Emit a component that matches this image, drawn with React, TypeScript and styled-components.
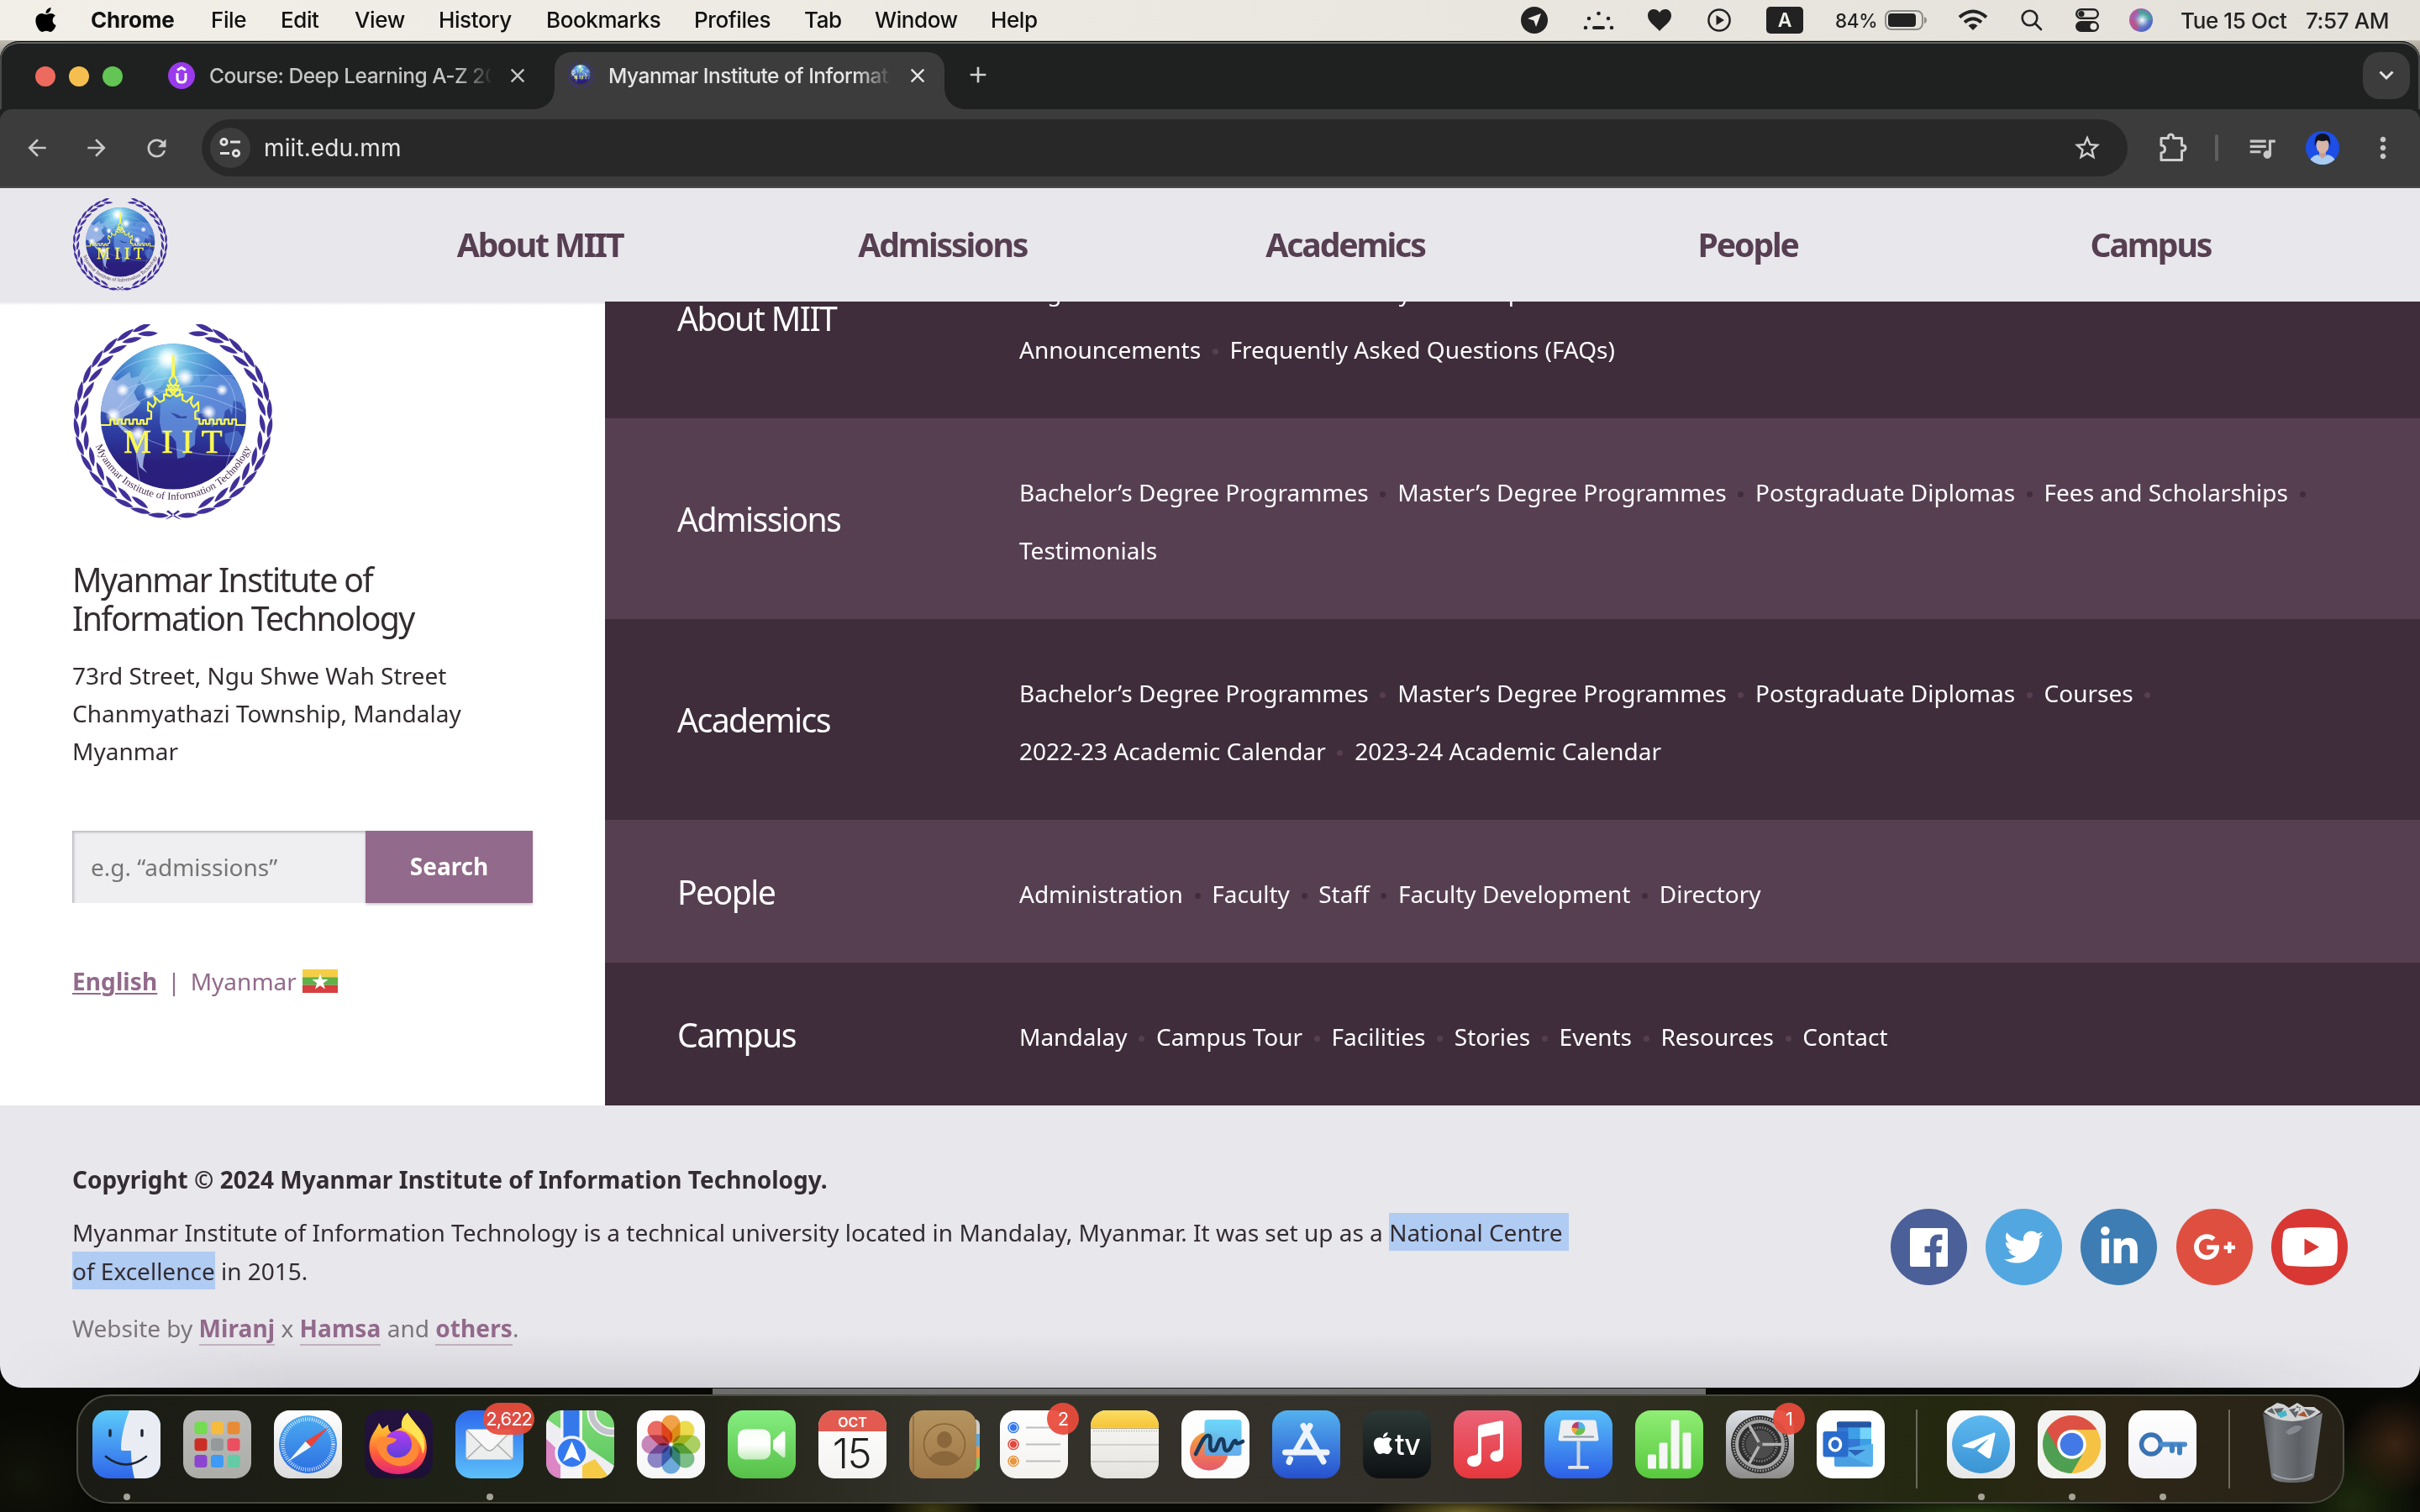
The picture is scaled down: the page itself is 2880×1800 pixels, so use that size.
import React from "react";
import styled, { createGlobalStyle } from "styled-components";
import { FaApple, FaTwitter, FaLinkedinIn, FaGooglePlusG } from "react-icons/fa";
import { MdArrowBack, MdArrowForward, MdRefresh, MdStarOutline, MdQueueMusic, MdClose, MdAdd, MdMoreVert } from "react-icons/md";

const ui = `Inter, "Liberation Sans", sans-serif`;
const noto = `"Noto Sans", "Open Sans", sans-serif`;

const Global = createGlobalStyle`
  html, body { margin: 0; padding: 0; }
  body { width: 2880px; height: 1800px; overflow: hidden; background: #0b0c07; }
  * { box-sizing: border-box; }
  svg { display: block; flex: none; }
`;

/* ---------- desktop ---------- */
const Desktop = styled.div`
  width: 2880px;
  height: 1800px;
  display: flex;
  flex-direction: column;
  overflow: hidden;
  background:
    linear-gradient(#c2bdb1, #8c887e) 0 48px / 100% 24px no-repeat,
    radial-gradient(ellipse 60px 30px at 1110px 1798px, #3c3a12, transparent),
    radial-gradient(ellipse 110px 20px at 1740px 1800px, #6e6226, transparent),
    radial-gradient(ellipse 160px 22px at 1920px 1802px, #3b3818, transparent),
    radial-gradient(ellipse 200px 22px at 2350px 1800px, #23370f, transparent),
    radial-gradient(ellipse 60px 60px at 2850px 1720px, #3a2413, transparent),
    radial-gradient(ellipse 90px 90px at 2800px 1790px, #1d2a0d, transparent),
    radial-gradient(ellipse 90px 80px at 30px 1760px, #12150a, transparent),
    #080805;
`;

const MenuBar = styled.header`
  height: 48px;
  flex: none;
  display: flex;
  justify-content: space-between;
  background: linear-gradient(90deg, #f1efe8, #e4e1da);
  font: 500 26px/47px ${ui};
  letter-spacing: -0.4px;
  color: #111;
  white-space: nowrap;
`;
const MenuItems = styled.div`
  display: grid;
  grid-template-columns: 67px 143px 83px 88px 100px 128px 176px 131px 84px 138px 80px;
  padding-left: 41px;
`;
const MenuItem = styled.span<{ $bold?: boolean }>`
  font-weight: ${(p) => (p.$bold ? 700 : 500)};
  letter-spacing: ${(p) => (p.$bold ? "-0.15px" : "-0.4px")};
`;
const AppleMark = styled.span`
  padding: 7px 0 0;
  margin-left: -3px;
`;
const Status = styled.div`
  display: grid;
  grid-template-columns: 74px 77px 71px 70px 82px 59px 87px 75px 65px 64px 61px 149px 136px;
  align-items: center;
  color: #222;
`;
const Battery = styled.span`
  font-size: 22.5px;
`;
const ABox = styled.span`
  width: 44px;
  height: 32px;
  border-radius: 5px;
  background: #222;
  color: #f2f0ea;
  font: 600 23px/32px ${ui};
  text-align: center;
`;

/* ---------- browser ---------- */
const Window = styled.main`
  margin-top: 1px;
  height: 1603px;
  flex: none;
  display: flex;
  flex-direction: column;
  border-radius: 22px 22px 26px 26px;
  overflow: hidden;
  background: #1f2120;
`;
const TabStrip = styled.div`
  height: 81px;
  flex: none;
  display: flex;
  align-items: flex-end;
  background: #1f2120;
  border-radius: 22px 22px 0 0;
  box-shadow: inset 0 1px #000, inset 0 3px #626565, inset 2px 0 #484a4a, inset -2px 0 #484a4a;
  font: 500 24.5px/54px ${ui};
  color: #c9c9c9;
  padding-left: 42px;
`;
const Lights = styled.div`
  display: flex;
  gap: 16px;
  width: 138px;
  height: 68px;
  align-items: flex-start;
  padding-top: 17px;
`;
const Light = styled.i<{ $c: string }>`
  width: 24px;
  height: 24px;
  border-radius: 50%;
  background: ${(p) => p.$c};
`;
const Tab = styled.div<{ $active?: boolean }>`
  position: relative;
  width: ${(p) => (p.$active ? "464px" : "480px")};
  height: 68px;
  display: flex;
  gap: 16px;
  padding: 1px ${(p) => (p.$active ? "18px 0 15px" : "30px 0 20px")};
  background: ${(p) => (p.$active ? "#3c3c3c" : "transparent")};
  color: ${(p) => (p.$active ? "#e6e6e6" : "#c6c6c6")};
  border-radius: 20px 20px 0 0;
  &::before, &::after {
    content: "";
    display: ${(p) => (p.$active ? "block" : "none")};
    position: absolute;
    bottom: 0;
    width: 24px;
    height: 24px;
    background: radial-gradient(circle at 0 0, transparent 23.5px, #3c3c3c 24px);
  }
  &::before { left: -24px; }
  &::after { right: -24px; transform: scaleX(-1); }
`;
const Favicon = styled.span`
  padding-top: 11px;
  width: 32px;
`;
const TabTitle = styled.span<{ $w: number }>`
  width: ${(p) => p.$w}px;
  overflow: hidden;
  white-space: nowrap;
  letter-spacing: -0.5px;
  padding-left: 1px;
  -webkit-mask-image: linear-gradient(90deg, #000 88%, transparent 101%);
  mask-image: linear-gradient(90deg, #000 88%, transparent 101%);
`;
const TabClose = styled.span`
  margin-left: auto;
  padding-top: 13px;
  stroke: currentColor;
  stroke-width: 0.6px;
`;
const NewTab = styled.span`
  margin-left: 24px;
  height: 57px;
  color: #cfcfcf;
`;
const TabSearch = styled.span`
  margin: 0 12px 12px auto;
  width: 56px;
  height: 56px;
  border-radius: 20px;
  background: #3c3c3c;
  display: grid;
  place-items: center;
`;
const Toolbar = styled.div`
  height: 94px;
  flex: none;
  display: flex;
  align-items: center;
  padding: 0 0 0 28px;
  background: #3c3c3c;
  border-bottom: 2px solid #4a4a4a;
  border-radius: 14px 14px 0 0;
  color: #c8c8c8;
`;
const NavButtons = styled.div`
  width: 212px;
  display: flex;
  gap: 39px;
`;
const Omnibox = styled.div`
  width: 2292px;
  height: 68px;
  border-radius: 34px;
  background: #282828;
  display: flex;
  align-items: center;
  padding: 0 30px 0 10px;
  font: 400 28px/68px ${ui};
  color: #e5e5e5;
`;
const SiteInfo = styled.span`
  width: 48px;
  height: 48px;
  border-radius: 50%;
  background: #3c3c3c;
  display: grid;
  place-items: center;
  margin-right: 16px;
`;
const Url = styled.span`
  flex: 1;
  letter-spacing: 0.1px;
`;
const Actions = styled.div`
  flex: 1;
  display: grid;
  grid-template-columns: 68px 37px 71px 72px 40px;
  padding-left: 36px;
  align-items: center;
`;
const Divider = styled.i`
  width: 4px;
  height: 32px;
  border-radius: 2px;
  background: #5e5e5e;
`;

/* ---------- site ---------- */
const Nav = styled.nav`
  height: 135px;
  flex: none;
  display: flex;
  background: #e8e7ec;
  padding: 12px 80px 0 86px;
`;
const NavLinks = styled.div`
  width: 2396px;
  margin-left: 203px;
  display: grid;
  grid-template-columns: repeat(5, 1fr);
  text-align: center;
  font: 700 39.2px/110px ${noto};
  letter-spacing: -2.15px;
  color: #573f52;
`;
const Body = styled.div`
  height: 957px;
  flex: none;
  display: flex;
  overflow: hidden;
`;
const Sidebar = styled.aside`
  width: 720px;
  padding: 27px 86px 0;
  background: linear-gradient(#e3e2e8, #fff) 0 0 / 100% 4px no-repeat, #fff;
  font: 400 28px/45.3px ${noto};
  color: #332c31;
`;
const SideTitle = styled.h2`
  margin: 48px 0 22.5px;
  font: 400 39.2px/46px ${noto};
  letter-spacing: -1.6px;
`;
const Address = styled.p`
  margin: 0;
`;
const SearchForm = styled.div`
  margin-top: 71px;
  display: flex;
  width: 548px;
  height: 86px;
`;
const SearchInput = styled.div`
  width: 349px;
  padding-left: 22px;
  background: #efeff1;
  box-shadow: inset 2px 2px 3px #bbbbc0;
  line-height: 87px;
  color: #757575;
`;
const SearchButton = styled.div`
  width: 199px;
  background: #926a8b;
  box-shadow: 0 2px 3px rgba(0, 0, 0, 0.2);
  color: #fff;
  font-weight: 700;
  line-height: 85px;
  text-align: center;
`;
const Languages = styled.div`
  margin-top: 71px;
  display: flex;
  align-items: center;
  color: #926a8b;
`;
const Current = styled.b`
  text-decoration: underline;
  text-decoration-thickness: 2px;
  text-underline-offset: 3px;
  letter-spacing: 0.1px;
`;
const Bar = styled.span`
  margin: 0 12px 0 12px;
`;
const FlagBox = styled.span`
  margin-left: 7px;
`;
const Sections = styled.div`
  flex: 1;
  display: flex;
  flex-direction: column;
  justify-content: flex-end;
  overflow: hidden;
`;
const Section = styled.section<{ $dark: boolean; $h: number }>`
  height: ${(p) => p.$h}px;
  flex: none;
  display: grid;
  grid-template-columns: 407px 1fr;
  padding: 0 74px 0 86px;
  background: ${(p) => (p.$dark ? "#3f2d3b" : "#573f52")};
  color: #fff;
  --dot: ${(p) => (p.$dark ? "#573f52" : "#3f2d3b")};
`;
const SectionTitle = styled.h3`
  margin: 1px 0 0;
  align-self: center;
  font: 400 39.2px/46px ${noto};
  letter-spacing: -1.6px;
`;
const Links = styled.ul`
  list-style: none;
  margin: 0;
  padding: 54px 0 0;
  display: flex;
  flex-wrap: wrap;
  align-content: flex-start;
  font: 400 28px/69px ${noto};
`;
const LinkItem = styled.li`
  display: flex;
  align-items: center;
  white-space: nowrap;
  &:not(:last-child)::after {
    content: "";
    width: 7px;
    height: 7px;
    margin: 3px 13.7px 0;
    border-radius: 50%;
    background: var(--dot);
  }
`;
const Footer = styled.footer`
  position: relative;
  flex: 1;
  display: flex;
  justify-content: space-between;
  padding: 66px 86px 0;
  background: #e8e7ec;
  font: 400 28px/45.3px ${noto};
  color: #332c31;
  &::after {
    content: "";
    position: absolute;
    inset: auto 0 0 0;
    height: 64px;
    background: linear-gradient(transparent, rgba(60, 58, 66, 0.12));
    -webkit-mask-image: linear-gradient(90deg, transparent, #000 12%, #000 88%, transparent);
    mask-image: linear-gradient(90deg, transparent, #000 12%, #000 88%, transparent);
  }
`;
const Para = styled.p<{ $mt?: number; $muted?: boolean }>`
  margin: ${(p) => p.$mt || 0}px 0 0;
  color: ${(p) => (p.$muted ? "#7b757b" : "inherit")};
  white-space: nowrap;
`;
const Strong = styled.b`
  letter-spacing: 0.03px;
`;
const Mark = styled.span`
  background: #b1ccf3;
  padding: 4px 0 3px;
`;
const CreditLink = styled.b`
  color: #926a8b;
  border-bottom: 2px solid #c4b3c3;
  letter-spacing: 0.1px;
`;
const Socials = styled.div`
  margin-top: 57px;
  height: 91px;
  display: flex;
  gap: 22.3px;
`;
const Social = styled.span<{ $c: string }>`
  width: 91px;
  height: 91px;
  border-radius: 50%;
  background: ${(p) => p.$c};
  color: #fff;
  display: grid;
  place-items: center;
`;

/* ---------- dock ---------- */
const Peek = styled.div`
  width: 1182px;
  height: 8px;
  flex: none;
  margin-left: 848px;
  background: #6b6b6b;
  border-top: 1px solid #111;
`;
const Dock = styled.div`
  width: 2699px;
  height: 130px;
  flex: none;
  margin-left: 91px;
  padding: 17px 0 0 17px;
  display: flex;
  gap: 27px;
  border: 2px solid #4b4a40;
  border-radius: 40px;
  background: linear-gradient(90deg, #1b1b15, #1e2115 15%, #24241a 28%, #33322a 38%, #33302a 60%, #2a2b19 76%, #23280f 82%, #2e2718 90%, #272217);
`;
const DockItem = styled.div<{ $ml?: number; $running?: boolean }>`
  position: relative;
  width: 81px;
  height: 106px;
  margin-left: ${(p) => p.$ml || 0}px;
  &::after {
    content: "";
    display: ${(p) => (p.$running ? "block" : "none")};
    width: 8px;
    height: 8px;
    margin: 18px auto 0;
    border-radius: 50%;
    background: #a5a396;
  }
`;
const DockRule = styled.i<{ $ml: number }>`
  width: 2px;
  height: 94px;
  margin: -1px 0 0 ${(p) => p.$ml}px;
  background: #6b6a5e;
`;
const Badge = styled.span`
  position: absolute;
  top: -9px;
  right: -13px;
  min-width: 38px;
  height: 38px;
  padding: 0 3px;
  border-radius: 19px;
  background: rgba(233, 75, 60, 0.94);
  color: #fff;
  font: 400 22px/38px ${ui};
  letter-spacing: -1px;
  text-align: center;
`;

/* ---------- emblem ---------- */
const leafAngles = Array.from({ length: 15 }, (_, i) => 19 + i * 10.9);
const leaf = "M-3 35C-13 16 -11 -14 3 -40C12 -12 11 14 -3 35Z";
const innerLeaf = "M3 36C-11 16 -12 -12 -3 -36C11 -14 13 12 3 36Z";
const halfWall =
  "M132 380H166V360H180V376H193V360H207V376H220V360H234V376H247V360H261V376H274V362H284V376H297V358H312V332L300 328L301 298L318 316L328 300L322 278L343 298L358 290L357 270L380 278L366 268L366 252L382 258L370 238L384 240L376 222L387 205L390 130";
const Emblem = ({ size, id }: { size: number; id: string }) => (
  <svg width={size} height={size * 0.972} viewBox="30 20 720 700">
    <defs>
      <linearGradient id={id + "g"} x1="0" y1="0" x2="0" y2="1">
        <stop offset="0" stopColor="#3f86d2" />
        <stop offset=".35" stopColor="#3c63bd" />
        <stop offset=".62" stopColor="#2c3ba0" />
        <stop offset=".82" stopColor="#2a1f7c" />
      </linearGradient>
      <radialGradient id={id + "h"} cx=".46" cy=".1" r=".42">
        <stop offset="0" stopColor="#d8ffff" />
        <stop offset=".35" stopColor="#74c6e6" stopOpacity=".85" />
        <stop offset="1" stopColor="#4a90d8" stopOpacity="0" />
      </radialGradient>
      <radialGradient id={id + "s"}>
        <stop offset="0" stopColor="#fff" />
        <stop offset=".35" stopColor="#fff" stopOpacity=".8" />
        <stop offset="1" stopColor="#fff" stopOpacity="0" />
      </radialGradient>
      <clipPath id={id + "c"}>
        <circle cx="391" cy="350" r="260" />
      </clipPath>
      <path id={id + "t"} d="M113 454A297 297 0 0 0 669 454" />
    </defs>
    <circle cx="391" cy="350" r="260" fill={`url(#${id}g)`} />
    <g clipPath={`url(#${id}c)`}>
      <path d="M130 260L165 215L190 222L235 190L240 212L268 205L285 175L320 165L350 165L372 200L345 245L318 262L300 285L288 240L270 222L262 240L250 262L262 290L275 300L245 335L215 350L205 380L235 400L285 420L300 450L285 500L282 530L298 552L270 530L258 480L255 440L205 395L160 340L130 330Z" fill="#a9c2ec" opacity=".85" />
      <path d="M345 300L360 285L380 290L410 240L400 210L440 180L480 195L490 230L520 200L600 210L650 250V330L632 300L606 292L600 345L590 320L575 330L566 385L548 352L530 390L512 335L480 340L480 380L470 400L468 450L442 470L430 495L405 500L400 440L385 420L350 410L342 370Z" fill="#6794de" opacity=".8" />
      <path d="M575 410L620 400L640 425L650 470L600 480L575 440Z" fill="#4f78cc" opacity=".7" />
      <path d="M380 335L400 340L420 350L440 348L436 356L405 355Z" fill="#2c479f" />
      <circle cx="391" cy="350" r="260" fill={`url(#${id}h)`} />
      <g fill="none" stroke="#dbe9ff" strokeWidth="2.5" opacity=".55">
        <path d="M372 143Q240 130 170 220M372 143Q560 160 600 250T570 560M372 143Q250 240 175 345M210 255Q400 180 650 210M175 345Q420 200 565 255M175 345Q330 500 640 490M265 410Q250 500 275 600M372 143Q480 110 540 130M305 265Q420 230 640 330" />
      </g>
      {[[372, 143, 42], [432, 210, 34], [210, 255, 24], [305, 265, 22], [565, 255, 22], [517, 335, 28], [176, 346, 28], [266, 410, 30]].map(([x, y, r]) => (
        <circle key={x} cx={x} cy={y} r={r} fill={`url(#${id}s)`} />
      ))}
    </g>
    <g fill="none" stroke="#fcf951" strokeWidth="6.5" strokeLinejoin="round">
      <path d={halfWall} />
      <path d={halfWall} transform="translate(781 0) scale(-1 1)" />
      <path d="M382 235L398 250L382 262L400 276M398 235L382 250L398 262L382 276" />
    </g>
    <text y="478" fontFamily="Liberation Serif, serif" fontSize="122" fill="#fcf951" stroke="#fcf951" strokeWidth="2">
      <tspan x="214" textLength="98" lengthAdjust="spacingAndGlyphs">M</tspan>
      <tspan x="349">I</tspan>
      <tspan x="421">I</tspan>
      <tspan x="491">T</tspan>
    </text>
    <text fontFamily="Liberation Serif, serif" fontSize="37" fill="#4a2f52">
      <textPath href={`#${id}t`} textLength="712" lengthAdjust="spacingAndGlyphs">
        Myanmar Institute of Information Technology
      </textPath>
    </text>
    <g fill="#42309a">
      {[1, -1].map((side) => (
        <g key={side} transform={side === 1 ? undefined : "translate(780 0) scale(-1 1)"}>
          {leafAngles.map((a, i) => (
            <g key={a} transform={`rotate(${-a} 390 360)`}>
              <path d={leaf} transform="translate(390 14) rotate(80)" />
              {i < 14 && <path d={innerLeaf} transform="translate(404 41) rotate(111)" />}
            </g>
          ))}
        </g>
      ))}
      <path d="M362 718Q374 716 414 690L408 684Q384 704 362 718ZM418 718Q406 716 366 690L372 684Q396 704 418 718Z" />
    </g>
  </svg>
);

/* ---------- dock artwork ---------- */
const Grad = ({ id, c }: { id: string; c: string[] }) => (
  <linearGradient id={id} x1="0" y1="0" x2="0" y2="1">
    {c.map((s, i) => (
      <stop key={i} offset={i / (c.length - 1)} stopColor={s} />
    ))}
  </linearGradient>
);
const Tile = ({ id, c, children }: { id: string; c: string[]; children?: React.ReactNode }) => (
  <svg width="81" height="81" viewBox="0 0 81 81" overflow="visible">
    <defs>
      <Grad id={id} c={c} />
      <clipPath id={id + "clip"}>
        <rect width="81" height="81" rx="18.5" />
      </clipPath>
    </defs>
    <rect width="81" height="81" rx="18.5" fill={`url(#${id})`} />
    {children}
  </svg>
);

const Finder = () => (
  <Tile id="finder" c={["#5ccbfa", "#2f66ea"]}>
    <g clipPath="url(#finderclip)">
      <path d="M44 0C37 18 34 34 34 46Q34 48 36 48H46C46 62 48 72 50 81H81V0Z" fill="#e9edf3" />
    </g>
    <path d="M21 24V30M59 24V30" stroke="#1c2433" strokeWidth="3.4" strokeLinecap="round" />
    <path d="M16 55Q40 74 64 55" stroke="#1c2433" strokeWidth="2.6" fill="none" strokeLinecap="round" />
  </Tile>
);
const Launchpad = () => (
  <Tile id="launch" c={["#bcbdbb", "#acada8"]}>
    {["#73dc50", "#f6bb3d", "#e88b35", "#cb2f24", "#96999b", "#ec4f5f", "#8b45cf", "#3d9af5", "#63cba5"].map((c, i) => (
      <rect key={c} x={13.5 + (i % 3) * 19.5} y={13.5 + Math.floor(i / 3) * 19.7} width="15" height="15" rx="3.5" fill={c} />
    ))}
  </Tile>
);
const Safari = () => (
  <Tile id="safari" c={["#ffffff", "#dcdcdd"]}>
    <defs><Grad id="saf2" c={["#4cabf0", "#2c6fe2"]} /></defs>
    <circle cx="40.5" cy="40.5" r="34.5" fill="url(#saf2)" />
    <circle cx="40.5" cy="40.5" r="30" fill="none" stroke="#fff" strokeWidth="4.5" strokeDasharray=".9 1.7" opacity=".85" />
    <path d="M65 20L37.5 37L44 43.5Z" fill="#ea4338" />
    <path d="M17 61L37.5 37L44 43.5Z" fill="#f4f6f8" />
  </Tile>
);
const Firefox = () => (
  <Tile id="fox" c={["#23123f", "#1d1035"]}>
    <defs>
      <Grad id="fx1" c={["#ffe14a", "#ffb02f", "#ff5a3c", "#e52877"]} />
      <Grad id="fx2" c={["#b23cf0", "#5b3fd8"]} />
    </defs>
    <path d="M51 3C56 12 66 20 71 30C79 50 70 76 40 76C14 76 3 56 6 38C8 28 14 23 17 15C19 18 20 20 21 22C24 20 26 18 28 17C28 22 29 25 33 27C38 22 42 22 44 20C43 12 46 7 51 3Z" fill="url(#fx1)" />
    <circle cx="40" cy="41" r="17" fill="url(#fx2)" />
    <path d="M14 35C20 29 30 32 38 34C37 39 30 39 27 42C24 50 32 58 42 56C50 55 56 48 56 41C56 33 52 29 50 28C60 30 66 40 64 51C60 64 46 70 32 64C18 58 13 46 14 35Z" fill="#ff8a35" />
    <path d="M51 3C56 12 66 20 69 30C72 38 72 46 69 52C68 42 62 32 54 27C48 24 44 20 44 18C44 11 47 6 51 3Z" fill="#ffe352" />
  </Tile>
);
const Mail = () => (
  <Tile id="mail" c={["#2d69ee", "#5cc0f9"]}>
    <rect x="12.5" y="22.500" width="56" height="36" rx="3.500" fill="#eceded" />
    <path d="M13 58L33 39M68 58L48 39" stroke="#a9aaac" strokeWidth="1.400" />
    <path d="M13 23L36 46Q40.500 50 45 46L68 23" fill="#f8f8f8" stroke="#a9aaac" strokeWidth="1.400" />
  </Tile>
);
const Maps = () => (
  <Tile id="maps" c={["#7fdc78", "#58c35c"]}>
    <g clipPath="url(#mapsclip)">
      <path d="M0 24L18 38V81H0Z" fill="#dc86c5" />
      <path d="M0 10L81 66V90H60L0 34Z" fill="#eeeef2" />
      <path d="M43 65L58 58L76 81H43Z" fill="#f5ca45" />
      <rect x="17" y="0" width="26" height="81" fill="#f5f5f7" />
      <rect x="20.500" y="0" width="19" height="52" fill="#3478ea" />
      <circle cx="78" cy="2" r="24" fill="none" stroke="#f3f3f5" strokeWidth="11" />
      <circle cx="78" cy="2" r="24" fill="none" stroke="#c3c4cb" strokeWidth="7" />
    </g>
    <circle cx="30.500" cy="50.500" r="18.500" fill="#3478f0" stroke="#f1f1f4" strokeWidth="3.500" />
    <path d="M30.500 37L41 61L30.500 55.500L20 61Z" fill="#fff" />
  </Tile>
);
const Petal = styled.rect`
  mix-blend-mode: multiply;
`;
const Photos = () => (
  <Tile id="photos" c={["#ffffff", "#f6f6f6"]}>
    {["#f0952d", "#ecd932", "#a3cd4b", "#6bba78", "#5ba3de", "#7f77c4", "#c277b4", "#e9564c"].map((c, i) => (
      <Petal key={c} x="29.500" y="5.500" width="22" height="33" rx="11" fill={c} opacity=".87" transform={`rotate(${i * 45} 40.500 40.500)`} />
    ))}
  </Tile>
);
const FaceTime = () => (
  <Tile id="ft" c={["#85ee80", "#57c049"]}>
    <defs><Grad id="ft2" c={["#f6fff4", "#ffffff", "#c5edbe"]} /></defs>
    <rect x="12" y="22.500" width="39" height="36" rx="9" fill="url(#ft2)" />
    <path d="M54 36L64.500 26Q68.500 23 68.500 28V53Q68.500 58 64.500 55L54 46Z" fill="url(#ft2)" />
  </Tile>
);
const Calendar = () => (
  <Tile id="cal" c={["#ffffff", "#f4f3f1"]}>
    <g clipPath="url(#calclip)"><rect width="81" height="25" fill="#e35b50" /></g>
    <text x="40.500" y="19.500" textAnchor="middle" fontFamily="Inter, sans-serif" fontWeight="600" fontSize="16" fill="#fff">OCT</text>
    <text x="39.500" y="68.500" textAnchor="middle" fontFamily="Inter, sans-serif" fontWeight="300" fontSize="49" letterSpacing="-1.500" fill="#222">15</text>
  </Tile>
);
const Contacts = () => (
  <svg width="81" height="81" viewBox="0 0 81 81" overflow="visible">
    <defs><Grad id="cont" c={["#b5945f", "#a07848"]} /></defs>
    <path d="M76 11H80Q84 13 84 18V29H76Z" fill="#cfcfcb" />
    <rect x="76" y="28" width="8" height="15" fill="#59a9e2" />
    <rect x="76" y="43" width="8" height="14" fill="#f0953e" />
    <path d="M76 57H84V66Q84 70 78 73Z" fill="#6fce68" />
    <rect width="80" height="81" rx="17" fill="url(#cont)" />
    <path d="M5 7V74" stroke="#8a683c" strokeWidth="1.500" />
    <g fill="none" stroke="#876438" strokeWidth="1.600">
      <circle cx="42" cy="40.500" r="24.500" />
    </g>
    <ellipse cx="42" cy="35" rx="9" ry="10" fill="#8b683b" />
    <path d="M24 57Q30 48.500 42 48.500T60 57Q52 65 42 65T24 57Z" fill="#8b683b" />
  </svg>
);
const Reminders = () => (
  <Tile id="rem" c={["#ffffff", "#f3f2ef"]}>
    {["#3478f0", "#e2483c", "#e8963a"].map((c, i) => (
      <g key={c}>
        <circle cx="16" cy={20.5 + i * 20} r="6" fill="none" stroke={c} strokeWidth="1.500" />
        <circle cx="16" cy={20.5 + i * 20} r="4.200" fill={c} />
        <path d={`M31 ${20.5 + i * 20}H72`} stroke="#bdbdbd" strokeWidth="1.800" />
      </g>
    ))}
  </Tile>
);
const Notes = () => (
  <Tile id="notes" c={["#fbfaf8", "#e5e3df"]}>
    <defs><Grad id="nt2" c={["#fbdd64", "#f6c436"]} /></defs>
    <g clipPath="url(#notesclip)"><rect width="81" height="20.500" fill="url(#nt2)" /></g>
    <path d="M0 21.300H81" stroke="#b7a77a" strokeWidth="1.200" />
    <path d="M3 24.500H79" stroke="#b5b3ae" strokeWidth="1.300" strokeDasharray="1.300 1.700" />
    <path d="M0 41H81M0 61H81" stroke="#c9c7c3" strokeWidth="1.300" />
  </Tile>
);
const Freeform = () => (
  <Tile id="free" c={["#ffffff", "#fbfbfb"]}>
    <defs>
      <Grad id="fr1" c={["#f6a23b", "#e7596b"]} />
      <Grad id="fr2" c={["#62d4f8", "#58a6ea"]} />
    </defs>
    <circle cx="33" cy="48.500" r="23" fill="url(#fr1)" />
    <rect x="27.500" y="11" width="44" height="43" rx="4" fill="url(#fr2)" opacity=".93" />
    <path d="M17 52C24 38 27 30 32 30C38 30 30 48 38 48C43 48 43 34 48 34C52 34 49 48 54 48C60 48 60 36 64 36C66 36 62 43 73 37" fill="none" stroke="#173a5e" strokeWidth="4.600" strokeLinecap="round" />
  </Tile>
);
const AppStore = () => (
  <Tile id="store" c={["#54b2ef", "#2650cf"]}>
    <g stroke="#eef4fc" strokeWidth="7" strokeLinecap="round">
      <path d="M45 18.500L27 50M37 18.500L61 61M15.500 50H65M21.500 58L20 61.500" />
    </g>
  </Tile>
);
const Tv = () => (
  <Tile id="tv" c={["#2c3936", "#0d1013"]}>
    <g transform="translate(9 24)" color="#fff"><FaApple size={30} /></g>
    <text x="38" y="53" fontFamily="Inter, sans-serif" fontWeight="500" fontSize="34" letterSpacing="-1" fill="#fff">tv</text>
  </Tile>
);
const Music = () => (
  <Tile id="music" c={["#ea6377", "#e7373d"]}>
    <path d="M29 20.500Q29 18 31.500 17.400L56 12.200Q59 11.800 59 14.500V53C59 58 56 61 51.500 61C47 61 43.500 58.500 43.500 54.800C43.500 51 46.500 49 50 48.300C54 47.500 55 47 55 44.500V27.500L33 32V58.500C33 64 29.500 67 24.500 67C20 67 16 64.500 16 60.500C16 56.500 19 54.700 22.500 54C27.500 53 29 52.500 29 49.500Z" fill="#fff" />
  </Tile>
);
const Keynote = () => (
  <Tile id="key" c={["#58bff8", "#2c5fe8"]}>
    <path d="M19.500 13Q20 11.500 22 11.500H59Q61 11.500 61.500 13L64.500 34Q64.500 36.500 62 36.500H19Q16.500 36.500 16.500 34Z" fill="#eceef1" />
    <path d="M22.500 31.500H59" stroke="#8998a8" strokeWidth="2" />
    <circle cx="40.500" cy="21.500" r="7.800" fill="#4aa7e8" />
    <path d="M40.500 21.500V13.700A7.800 7.800 0 0 1 48.300 21.500Z" fill="#4fb3f0" />
    <path d="M40.500 21.500L48.300 21.500A7.800 7.800 0 0 1 36 28Z" fill="#6cc04a" />
    <path d="M40.500 21.500L36 28A7.800 7.800 0 0 1 32.700 20.500Z" fill="#f2a73b" />
    <path d="M40.500 21.500L32.700 20.500A7.800 7.800 0 0 1 40.500 13.700Z" fill="#c23a6a" />
    <path d="M40.500 36.500V67" stroke="#cfd6de" strokeWidth="4" />
    <rect x="28" y="66" width="25" height="3.800" rx="1.500" fill="#e2e6ea" />
  </Tile>
);
const Numbers = () => (
  <Tile id="num" c={["#90ee75", "#57c83d"]}>
    <g fill="#f4f7f3">
      <rect x="15" y="52.500" width="10" height="17" rx="1.500" />
      <rect x="28.500" y="38.500" width="10" height="31" rx="1.500" />
      <rect x="42.500" y="11.500" width="10" height="58" rx="1.500" />
      <rect x="56.500" y="26.500" width="10" height="43" rx="1.500" />
    </g>
  </Tile>
);
const Settings = () => (
  <Tile id="set" c={["#dbe0e6", "#8f8d8c"]}>
    <circle cx="40.500" cy="40.500" r="34.500" fill="#2e2e2e" />
    <circle cx="40.500" cy="40.500" r="31.500" fill="none" stroke="#a9a9a9" strokeWidth="2.600" strokeDasharray="1.500 1.700" />
    <circle cx="40.500" cy="40.500" r="27.500" fill="none" stroke="#a8a8a8" strokeWidth="4" />
    <circle cx="40.500" cy="40.500" r="20" fill="none" stroke="#777" strokeWidth="3" strokeDasharray="1.600 1.500" />
    <circle cx="40.500" cy="40.500" r="17" fill="#4c4c4c" />
    <path d="M40.500 40.500H66M40.500 40.500L28 18M40.500 40.500L28 63" stroke="#b4b4b4" strokeWidth="3.600" />
    <circle cx="40.500" cy="40.500" r="3" fill="#555" />
  </Tile>
);
const Outlook = () => (
  <Tile id="out" c={["#ffffff", "#ffffff"]}>
    <rect x="24" y="13.500" width="41" height="36" rx="2" fill="#3577d4" />
    <rect x="24" y="13.500" width="41" height="7" rx="2" fill="#2456a3" />
    <rect x="37.500" y="20.500" width="14" height="13.500" fill="#3da0e6" />
    <rect x="51.500" y="20.500" width="13.500" height="13.500" fill="#74d4fb" />
    <rect x="51.500" y="34" width="13.500" height="13" fill="#3da0e6" />
    <path d="M21 47L67 40V64Q67 67 64 67H24Q21 67 21 64Z" fill="#55b1ea" />
    <path d="M37 47H58L46 54Z" fill="#2a63b8" />
    <path d="M21 47L67 67H24Q21 67 21 64Z" fill="#4a9fe2" />
    <rect x="7.500" y="25" width="30" height="30.500" rx="3" fill="#2a6ccc" />
    <ellipse cx="22" cy="40.500" rx="6.500" ry="7.200" fill="none" stroke="#fff" strokeWidth="3.600" />
  </Tile>
);
const Telegram = () => (
  <Tile id="tg" c={["#fefefe", "#e7e7e8"]}>
    <defs><Grad id="tg2" c={["#5db9f0", "#3b93d3"]} /></defs>
    <circle cx="40.500" cy="40.500" r="34.500" fill="url(#tg2)" />
    <path d="M19 41L56 26.500Q58 26 57.500 28.500L52 55.500Q51 58.500 48 56.500L36 48L50 33.500L31.500 45.500L20 43.500Q17 42.500 19 41Z" fill="#fff" />
  </Tile>
);
const ChromeIcon = () => (
  <Tile id="chr" c={["#f3f3f1", "#f3f3f1"]}>
    <circle cx="40.500" cy="40.500" r="34.500" fill="#f5c244" />
    <path d="M40.500 40.500L10.600 23.300A34.500 34.500 0 0 0 40.500 75L56 49.500Z" fill="#4f9f52" />
    <path d="M10.600 23.300A34.500 34.500 0 0 1 70.400 23.300H40.500L25.500 49.200Z" fill="#dd5144" />
    <path d="M40.500 23.300H70.400A34.500 34.500 0 0 1 40.500 75L55.400 49Z" fill="#f5c244" />
    <circle cx="40.500" cy="40.500" r="17.300" fill="#fff" />
    <circle cx="40.500" cy="40.500" r="13.800" fill="#4379e6" />
  </Tile>
);
const KeyIcon = () => (
  <Tile id="vpn" c={["#ffffff", "#f2f1f6"]}>
    <circle cx="27" cy="40.500" r="11.500" fill="none" stroke="#3a73b4" strokeWidth="5.500" />
    <path d="M39 40.500H67" stroke="#4a8ccc" strokeWidth="6" strokeLinecap="round" />
    <path d="M52 42V48M61 42V50.500" stroke="#4180c0" strokeWidth="6" strokeLinecap="round" />
  </Tile>
);
const Trash = () => (
  <svg width="81" height="92" viewBox="0 0 81 92" overflow="visible">
    <defs>
      <linearGradient id="can" x1="0" x2="1">
        <stop offset="0" stopColor="#55595d" />
        <stop offset=".2" stopColor="#777b7f" />
        <stop offset=".6" stopColor="#5d6165" />
        <stop offset="1" stopColor="#7d8185" />
      </linearGradient>
    </defs>
    <path d="M5 3L15 78Q17 86 40 86Q64 86 66 78L76 3Q60 12 40 12T5 3Z" fill="url(#can)" />
    <path d="M6 2Q10 -3 14 -4L22 -9L30 -7L36 -3L46 -9L54 -4L66 -4L74 2Q60 13 40 13T6 2Z" fill="#d2d3d4" />
    <path d="M10 1L16 -3L20 5ZM18 -2L24 7L30 -3ZM36 -1L44 9L50 -4ZM54 -2L60 7L68 1ZM46 -6L50 0L42 2Z" fill="#606367" />
    <path d="M22 3L32 0L34 6L26 9Z" fill="#43b6c8" />
    <path d="M46 6L54 1L58 8Z" fill="#a8542f" />
    <path d="M32 26Q44 14 52 20Q46 28 36 29Z" fill="#9da1a4" opacity=".6" />
    <path d="M17 76Q40 88 64 76" stroke="#a5a8ab" strokeWidth="1.500" fill="none" />
  </svg>
);

const apps: { el: React.ReactNode; badge?: string; run?: boolean }[] = [
  { el: <Finder />, run: true },
  { el: <Launchpad /> },
  { el: <Safari /> },
  { el: <Firefox /> },
  { el: <Mail />, badge: "2,622", run: true },
  { el: <Maps /> },
  { el: <Photos /> },
  { el: <FaceTime /> },
  { el: <Calendar /> },
  { el: <Contacts /> },
  { el: <Reminders />, badge: "2" },
  { el: <Notes /> },
  { el: <Freeform /> },
  { el: <AppStore /> },
  { el: <Tv /> },
  { el: <Music /> },
  { el: <Keynote /> },
  { el: <Numbers /> },
  { el: <Settings />, badge: "1" },
  { el: <Outlook /> },
];

const degrees = ["Bachelor’s Degree Programmes", "Master’s Degree Programmes", "Postgraduate Diplomas"];
const sections = [
  { t: "About MIIT", h: 239, l: ["Organisation", "Tours", "Community", "Concept and Vision", "News and Events", "Director’s Office", "Tenders", "Announcements", "Frequently Asked Questions (FAQs)"] },
  { t: "Admissions", h: 239, l: [...degrees, "Fees and Scholarships", "Testimonials"] },
  { t: "Academics", h: 239, l: [...degrees, "Courses", "2022-23 Academic Calendar", "2023-24 Academic Calendar"] },
  { t: "People", h: 170, l: ["Administration", "Faculty", "Staff", "Faculty Development", "Directory"] },
  { t: "Campus", h: 170, l: ["Mandalay", "Campus Tour", "Facilities", "Stories", "Events", "Resources", "Contact"] },
];

export default function App() {
  return (
    <Desktop>
      <Global />
      <MenuBar>
        <MenuItems>
          <AppleMark><FaApple size={33} color="#000" /></AppleMark>
          <MenuItem $bold>Chrome</MenuItem>
          {["File", "Edit", "View", "History", "Bookmarks", "Profiles", "Tab", "Window", "Help"].map((m) => (
            <MenuItem key={m}>{m}</MenuItem>
          ))}
        </MenuItems>
        <Status>
          <svg width="32" height="32" viewBox="0 0 32 32"><circle cx="16" cy="16" r="16" fill="#222" /><path d="M24 8L18 24L15.500 16.500L8 14Z" fill="#efede7" /></svg>
          <svg width="37" height="24" viewBox="0 0 37 24" fill="#222"><circle cx="18.500" cy="4" r="2.300" /><circle cx="7" cy="10" r="2.300" /><circle cx="30" cy="10" r="2.300" /><circle cx="3" cy="21" r="2.300" /><circle cx="34" cy="21" r="2.300" /><rect x="11" y="19" width="15" height="4" rx="2" /></svg>
          <svg width="28" height="28" viewBox="0 0 28 28"><path d="M14 27C8 20 0 16 0 8.500C0 3.500 3.500 1 7 1C10 1 12.500 2.500 14 5C15.500 2.500 18 1 21 1C24.500 1 28 3.500 28 8.500C28 16 20 20 14 27Z" fill="#222" /></svg>
          <svg width="28" height="28" viewBox="0 0 28 28"><circle cx="14" cy="14" r="12.600" fill="none" stroke="#222" strokeWidth="2.500" /><path d="M10.500 8L20 14L10.500 20Z" fill="#222" /></svg>
          <ABox>A</ABox>
          <Battery>84%</Battery>
          <svg width="50" height="24" viewBox="0 0 50 24"><rect x="1" y="1" width="44" height="22" rx="7" fill="none" stroke="#8c8b86" strokeWidth="2" /><rect x="4" y="4" width="33" height="16" rx="4" fill="#222" /><path d="M47 8Q50 9 50 12T47 16Z" fill="#8c8b86" /></svg>
          <svg width="36" height="26" viewBox="0 0 36 26" fill="none" stroke="#222" strokeWidth="4"><path d="M2 9.500Q18 -4.500 34 9.500" /><path d="M8 15.500Q18 7 28 15.500" /><path d="M18 25L12.500 19.500Q18 15 23.500 19.500Z" fill="#222" stroke="none" /></svg>
          <svg width="26" height="26" viewBox="0 0 26 26" fill="none" stroke="#222" strokeWidth="2.600" strokeLinecap="round"><circle cx="10.500" cy="10.500" r="8.800" /><path d="M17 17L24 24" /></svg>
          <svg width="28" height="28" viewBox="0 0 28 28"><rect x="1.200" y="1.200" width="25.600" height="10.600" rx="5.300" fill="none" stroke="#222" strokeWidth="2.400" /><circle cx="7" cy="6.500" r="3.600" fill="#222" /><rect y="15" width="28" height="13" rx="6.500" fill="#222" /><circle cx="21.500" cy="21.500" r="4" fill="#ebe8e1" /></svg>
          <svg width="28" height="28" viewBox="0 0 28 28">
            <defs>
              <linearGradient id="siriA" x1="0" y1="0" x2="1" y2="1"><stop offset="0" stopColor="#c84a8c" /><stop offset=".45" stopColor="#8f6fc0" /><stop offset="1" stopColor="#2a63c8" /></linearGradient>
              <radialGradient id="siriB" cx=".55" cy=".5" r=".5"><stop offset="0" stopColor="#fff" /><stop offset=".35" stopColor="#bfe6f2" stopOpacity=".6" /><stop offset=".8" stopColor="#3fb0a0" stopOpacity="0" /></radialGradient>
            </defs>
            <circle cx="14" cy="14" r="14" fill="url(#siriA)" /><path d="M10 1Q26 2 27 14L14 14Z" fill="#3aa890" opacity=".8" /><path d="M1 14Q1 24 10 27L13 14Z" fill="#d8436f" opacity=".6" /><circle cx="14" cy="14" r="13" fill="url(#siriB)" />
          </svg>
          <span>Tue 15 Oct</span>
          <span>7:57 AM</span>
        </Status>
      </MenuBar>

      <Window>
        <TabStrip>
          <Lights><Light $c="#ed6a5e" /><Light $c="#f5bf4f" /><Light $c="#62c554" /></Lights>
          <Tab>
            <Favicon>
              <svg width="32" height="32" viewBox="0 0 32 32"><circle cx="16" cy="16" r="16" fill="#9a3aed" /><path d="M11 13V19.500Q11 24 16 24T21 19.500V13M11 9.500L16 6.500L21 9.500" fill="none" stroke="#fff" strokeWidth="3" /></svg>
            </Favicon>
            <TabTitle $w={336}>Course: Deep Learning A-Z 2024</TabTitle>
            <TabClose><MdClose size={28} /></TabClose>
          </Tab>
          <Tab $active>
            <Favicon><Emblem size={32} id="fav" /></Favicon>
            <TabTitle $w={336}>Myanmar Institute of Information</TabTitle>
            <TabClose><MdClose size={28} /></TabClose>
          </Tab>
          <NewTab><MdAdd size={32} /></NewTab>
          <TabSearch><svg width="18" height="12" viewBox="0 0 18 12" fill="none" stroke="#e3e3e3" strokeWidth="3"><path d="M1.500 1.500L9 9L16.500 1.500" /></svg></TabSearch>
        </TabStrip>
        <Toolbar>
          <NavButtons><MdArrowBack size={32} /><MdArrowForward size={32} /><MdRefresh size={33} /></NavButtons>
          <Omnibox>
            <SiteInfo>
              <svg width="26" height="24" viewBox="0 0 26 24" fill="none" stroke="#e0e0e0" strokeWidth="3"><circle cx="5.500" cy="5" r="3.600" /><path d="M13 5H25M1 18.500H12" /><circle cx="20" cy="18.500" r="3.600" /></svg>
            </SiteInfo>
            <Url>miit.edu.mm</Url>
            <MdStarOutline size={36} color="#cfcfcf" />
          </Omnibox>
          <Actions>
            <svg width="36" height="36" viewBox="0 0 36 36" fill="none" stroke="#cfcfcf" strokeWidth="3"><path d="M4 6.500H12.500Q12 2 15.500 2T18.500 6.500H28.500V15Q33 14.500 33 18T28.500 21.500V32.500H4V24Q8.500 23.500 8.500 19.500T4 15Z" strokeLinejoin="round" /></svg>
            <Divider />
            <MdQueueMusic size={38} />
            <svg width="40" height="40" viewBox="0 0 40 40">
              <defs><clipPath id="av"><circle cx="20" cy="20" r="20" /></clipPath></defs>
              <g clipPath="url(#av)"><rect width="40" height="40" fill="#1d4ee6" /><path d="M3 40Q5 30 14 28L20 31L26 28Q35 30 37 40Z" fill="#a9ccf2" /><path d="M16 22H24V29L20 33L16 29Z" fill="#c9a08e" /><ellipse cx="20" cy="17" rx="7.500" ry="9.500" fill="#d8b5a4" /><path d="M11 19Q9 3 20 3T29 19Q28 12 25 11Q20 13 15 11Q12 13 11 19Z" fill="#10131f" /></g>
            </svg>
            <MdMoreVert size={40} />
          </Actions>
        </Toolbar>

        <Nav>
          <Emblem size={114} id="nav" />
          <NavLinks>
            {["About MIIT", "Admissions", "Academics", "People", "Campus"].map((n) => (
              <span key={n}>{n}</span>
            ))}
          </NavLinks>
        </Nav>
        <Body>
          <Sidebar>
            <Emblem size={240} id="side" />
            <SideTitle>Myanmar Institute of<br />Information Technology</SideTitle>
            <Address>73rd Street, Ngu Shwe Wah Street<br />Chanmyathazi Township, Mandalay<br />Myanmar</Address>
            <SearchForm>
              <SearchInput>e.g. “admissions”</SearchInput>
              <SearchButton>Search</SearchButton>
            </SearchForm>
            <Languages>
              <Current>English</Current>
              <Bar>|</Bar>
              <span>Myanmar</span>
              <FlagBox>
                <svg width="42" height="28" viewBox="0 0 42 28"><rect width="42" height="9.300" fill="#f6cd46" /><rect y="9.300" width="42" height="9.400" fill="#5fb148" /><rect y="18.700" width="42" height="9.300" fill="#d83e40" /><path d="M21 5L23.400 12H30.500L24.800 16.400L27 23.500L21 19.200L15 23.500L17.200 16.400L11.500 12H18.600Z" fill="#fff" /></svg>
              </FlagBox>
            </Languages>
          </Sidebar>
          <Sections>
            {sections.map((s, i) => (
              <Section key={s.t} $dark={i % 2 === 0} $h={s.h}>
                <SectionTitle>{s.t}</SectionTitle>
                <Links>{s.l.map((x) => <LinkItem key={x}>{x}</LinkItem>)}</Links>
              </Section>
            ))}
          </Sections>
        </Body>
        <Footer>
          <div>
            <Para><Strong>Copyright © 2024 Myanmar Institute of Information Technology.</Strong></Para>
            <Para $mt={18}>
              Myanmar Institute of Information Technology is a technical university located in Mandalay, Myanmar. It was set up as a <Mark>National Centre&nbsp;</Mark><br />
              <Mark>of Excellence</Mark> in 2015.
            </Para>
            <Para $mt={23} $muted>
              Website by <CreditLink>Miranj</CreditLink> x <CreditLink>Hamsa</CreditLink> and <CreditLink>others</CreditLink>.
            </Para>
          </div>
          <Socials>
            <Social $c="#4b6098">
              <svg width="45" height="46" viewBox="0 0 45 46"><path d="M2 0H43Q45 0 45 2V44Q45 46 43 46H31.500V29H37L38 21.500H31.500V18Q31.500 14 35 14H38.500V7.800Q37 7.500 34.500 7.500Q24 7.500 24 17V21.500H17.500V29H24V46H2Q0 46 0 44V2Q0 0 2 0Z" fill="#fff" /></svg>
            </Social>
            <Social $c="#53a7e0"><FaTwitter size={47} /></Social>
            <Social $c="#3d7db3"><FaLinkedinIn size={50} /></Social>
            <Social $c="#df4f40"><FaGooglePlusG size={51} /></Social>
            <Social $c="#d93733">
              <svg width="66" height="47" viewBox="0 0 66 47"><path d="M9 1Q33 -1 57 1Q64 1.500 65 8Q67 23.500 65 39Q64 45.500 57 46Q33 48 9 46Q2 45.500 1 39Q-1 23.500 1 8Q2 1.500 9 1Z" fill="#fff" /><path d="M26.500 13.500L44 23.500L26.500 33.500Z" fill="#d93733" /></svg>
            </Social>
          </Socials>
        </Footer>
      </Window>

      <Peek />
      <Dock>
        {apps.map((a, i) => (
          <DockItem key={i} $running={a.run}>
            {a.el}
            {a.badge && <Badge>{a.badge}</Badge>}
          </DockItem>
        ))}
        <DockRule $ml={10} />
        <DockItem $ml={8} $running><Telegram /></DockItem>
        <DockItem $running><ChromeIcon /></DockItem>
        <DockItem $running><KeyIcon /></DockItem>
        <DockRule $ml={11} />
        <DockItem $ml={7}><Trash /></DockItem>
      </Dock>
    </Desktop>
  );
}
